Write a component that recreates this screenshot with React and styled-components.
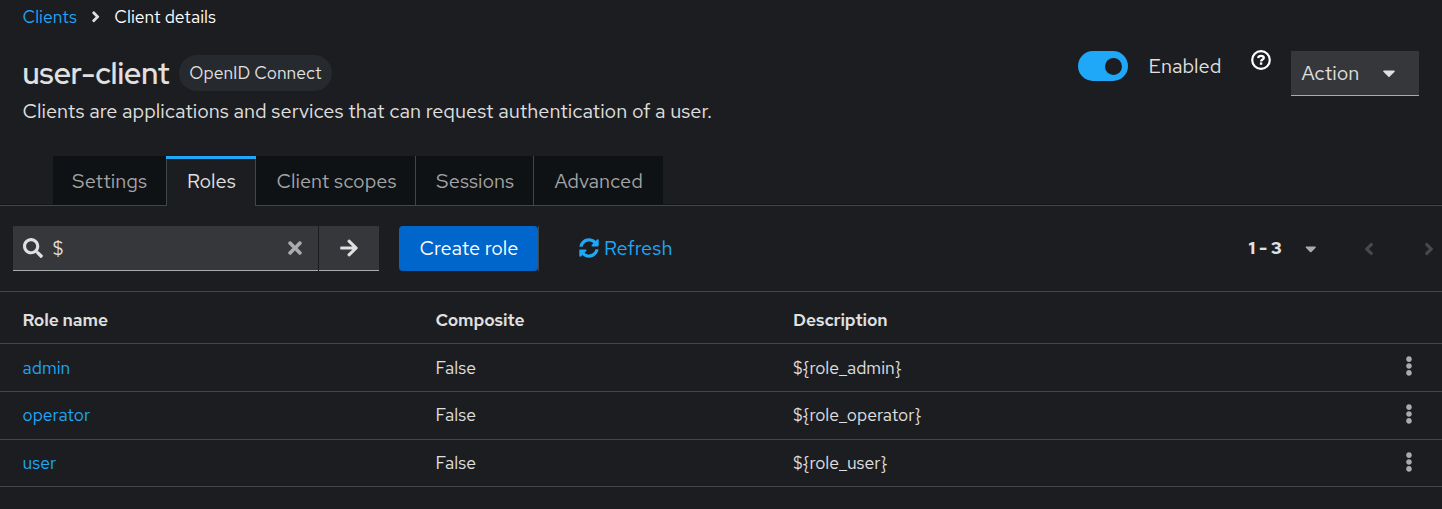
import React from "react";
import styled, { createGlobalStyle } from "styled-components";
import { FaSearch, FaTimes, FaArrowRight, FaSyncAlt, FaCaretDown, FaAngleLeft, FaAngleRight, FaEllipsisV } from "react-icons/fa";

const GlobalStyle = createGlobalStyle`
  * { box-sizing: border-box; }
  body {
    margin: 0;
    background: #1c1d21;
    color: #e0e0e0;
    font-family: "Red Hat Text", "Inter", "Liberation Sans", sans-serif;
    font-size: 17.5px;
    overflow: hidden;
  }
  button { font: inherit; border: 0; margin: 0; padding: 0; background: none; }
  svg { display: block; flex: none; }
`;

const Label = styled.span`
  display: inline-block;
  white-space: nowrap;
  letter-spacing: ${(p) => p.$track || 0}px;
`;

const Page = styled.main`
  height: 509px;
  display: flex;
  flex-direction: column;
  background: #1c1d21;
`;

const Breadcrumb = styled.nav`
  height: 33px;
  padding-left: 22.5px;
  display: flex;
  align-items: center;
  color: #fff;
  svg { margin: 0 10px 0 10px; color: #e0e0e0; }
`;

const Link = styled.a`
  color: #1fa7f8;
  text-decoration: none;
`;

const Header = styled.header`
  height: 123px;
  display: flex;
  justify-content: space-between;
  padding: 18px 23px 0 22.5px;
`;

const TitleRow = styled.div`
  height: 44px;
  display: flex;
  align-items: center;
`;

const Title = styled.h1`
  margin: 0;
  width: 156.5px;
  font-family: "Red Hat Display", "Red Hat Text", "Inter", sans-serif;
  font-size: 30px;
  line-height: 44px;
  font-weight: 600;
`;

const Chip = styled.span`
  width: 153px;
  height: 36px;
  border-radius: 18px;
  background: #26292d;
  display: flex;
  align-items: center;
  justify-content: center;
  padding-bottom: 2px;
`;

const Description = styled.p`
  margin: 0;
  font-size: 20px;
  line-height: 32px;
`;

const HeaderActions = styled.div`
  display: flex;
  align-items: flex-start;
  font-size: 20px;
`;

const Switch = styled.span`
  width: 50px;
  height: 30px;
  border-radius: 15px;
  background: #1fa7f8;
  display: flex;
  align-items: center;
  justify-content: flex-end;
  padding-right: 6px;
  &::after {
    content: "";
    width: 17px;
    height: 17px;
    border-radius: 50%;
    background: #1c1d21;
  }
`;

const SwitchText = styled.span`
  width: 102.5px;
  margin-left: 20.5px;
  line-height: 30px;
`;

const HelpSvg = styled.svg`
  margin-top: -1px;
`;

const ActionToggle = styled.button`
  width: 128px;
  height: 45px;
  margin-left: 20px;
  padding: 0 20px 0 10.5px;
  display: flex;
  align-items: center;
  justify-content: space-between;
  background: #36373a;
  border-bottom: 1px solid #aaabac;
  color: #e0e0e0;
`;

const Tabs = styled.div`
  height: 50px;
  padding-left: 53px;
  display: flex;
  align-items: stretch;
  background: linear-gradient(#444548, #444548) 0 49px / 100% 1px no-repeat,
    linear-gradient(#151618, #151618) 0 48px / 100% 1px no-repeat;
`;

const Tab = styled.button`
  width: ${(p) => p.$width}px;
  height: ${(p) => (p.$active ? 50 : 49)}px;
  padding: 0 0 ${(p) => (p.$active ? 3 : 0)}px ${(p) => p.$inset}px;
  font-size: 20px;
  color: ${(p) => (p.$active ? "#e0e0e0" : "#a3a4a6")};
  background: ${(p) => (p.$active ? "#1c1d21" : "#0f1214")};
  border-right: ${(p) => (p.$divider ? "1px solid #444548" : "0")};
  border-left: ${(p) => (p.$active ? "1px solid #444548" : "0")};
  border-top: ${(p) => (p.$active ? "3px solid #1fa7f8" : "0")};
  display: flex;
  align-items: center;
  justify-content: flex-start;
  ${(p) => p.$active && "border-image: linear-gradient(#1fa7f8 3px, #444548 3px) 3 1 0 1;"}
`;

const Toolbar = styled.div`
  height: 86px;
  padding: 20px 3px 20px 13px;
  display: flex;
  align-items: stretch;
  border-bottom: 1px solid #444548;
  font-size: 20px;
`;

const SearchBox = styled.div`
  width: 305px;
  padding: 0 13px 0 10px;
  display: flex;
  align-items: center;
  background: #36373a;
  border-bottom: 1px solid #aaabac;
`;

const SearchValue = styled.span`
  flex: 1;
  padding-left: 9.5px;
  font-size: 20px;
`;

const SearchSubmit = styled.button`
  width: 60px;
  margin-left: 1px;
  display: flex;
  align-items: center;
  justify-content: center;
  background: #36373a;
  border-bottom: 1px solid #aaabac;
  color: #e0e0e0;
`;

const PrimaryButton = styled.button`
  width: 139px;
  margin-left: 20px;
  padding: 0 0 1px 1px;
  border-radius: 4px;
  background: #0066cc;
  color: #fff;
`;

const ActionGroup = styled.div`
  display: flex;
  border-right: 1px solid #444548;
`;

const RefreshButton = styled.button`
  margin-left: 40px;
  display: flex;
  align-items: center;
  gap: 5px;
  padding-bottom: 1px;
  color: #1fa7f8;
  svg { margin-top: -1px; }
`;

const Pager = styled.div`
  margin-left: auto;
  display: flex;
  align-items: center;
  font-size: 17.5px;
  font-weight: 700;
`;

const PagerRange = styled.span`
  width: 53px;
  padding-bottom: 2px;
`;

const PagerArrow = styled.button`
  margin-left: ${(p) => p.$gap}px;
  color: #47484b;
`;

const Row = styled.div`
  height: ${(p) => p.$height}px;
  padding: 0 23px 0 22.5px;
  display: grid;
  grid-template-columns: 413px 357.5px 1fr 20px;
  align-items: center;
  border-bottom: 1px solid #444548;
  font-weight: ${(p) => (p.$head ? 600 : 400)};
  padding-top: ${(p) => (p.$head ? 3 : 0)}px;
  padding-bottom: ${(p) => p.$lift || 0}px;
`;

const Kebab = styled.button`
  display: flex;
  justify-content: center;
  color: #aaabac;
  margin-top: ${(p) => p.$drop - 3}px;
`;

const HelpIcon = () => (
  <HelpSvg width="20" height="20" viewBox="0 0 20 20" fill="none" stroke="#fff">
    <circle cx="10" cy="10" r="8.8" strokeWidth="2.2" />
    <path d="M7.1 8C7.4 6.5 8.5 5.9 10 5.9C11.6 5.9 12.8 6.7 12.8 8C12.8 9.6 10.1 9.5 10.1 11.5" strokeWidth="2.3" />
    <path d="M8.9 13.6H11.3" strokeWidth="2.3" />
  </HelpSvg>
);

const tabs = [
  { name: "Settings", width: 113, inset: 19 },
  { name: "Roles", width: 90, inset: 20, active: true, divider: true },
  { name: "Client scopes", width: 160, inset: 20.5, divider: true },
  { name: "Sessions", width: 118, inset: 20, divider: true },
  { name: "Advanced", width: 129, inset: 20.5 },
];

const roles = [
  { name: "admin", height: 48, lift: 0, drop: 0 },
  { name: "operator", height: 48, lift: 2, drop: 2 },
  { name: "user", height: 47, lift: 1, drop: 1 },
];

export default function App() {
  return (
    <Page>
      <GlobalStyle />
      <Breadcrumb>
        <Link><Label>Clients</Label></Link>
        <FaAngleRight size={17.5} />
        <Label>Client details</Label>
      </Breadcrumb>
      <Header>
        <div>
          <TitleRow>
            <Title><Label>user-client</Label></Title>
            <Chip><Label>OpenID Connect</Label></Chip>
          </TitleRow>
          <Description>
            <Label>Clients are applications and services that can request authentication of a user.</Label>
          </Description>
        </div>
        <HeaderActions>
          <Switch />
          <SwitchText><Label>Enabled</Label></SwitchText>
          <HelpIcon />
          <ActionToggle>
            <Label>Action</Label>
            <FaCaretDown size={20} />
          </ActionToggle>
        </HeaderActions>
      </Header>
      <Tabs>
        {tabs.map((t) => (
          <Tab key={t.name} $width={t.width} $inset={t.inset} $active={t.active} $divider={t.divider}>
            <Label>{t.name}</Label>
          </Tab>
        ))}
      </Tabs>
      <Toolbar>
        <SearchBox>
          <FaSearch size={20} />
          <SearchValue>$</SearchValue>
          <FaTimes size={20} color="#aaabac" />
        </SearchBox>
        <SearchSubmit><FaArrowRight size={20} /></SearchSubmit>
        <ActionGroup>
          <PrimaryButton><Label>Create role</Label></PrimaryButton>
        </ActionGroup>
        <RefreshButton>
          <FaSyncAlt size={20} />
          <Label>Refresh</Label>
        </RefreshButton>
        <Pager>
          <PagerRange><Label>1 - 3</Label></PagerRange>
          <FaCaretDown size={17.5} color="#aaabac" />
          <PagerArrow $gap={40}><FaAngleLeft size={20} /></PagerArrow>
          <PagerArrow $gap={40}><FaAngleRight size={20} /></PagerArrow>
        </Pager>
      </Toolbar>
      <Row $height={52} $head>
        <Label $track={-0.1}>Role name</Label>
        <Label $track={-0.15}>Composite</Label>
        <Label $track={-0.15}>Description</Label>
      </Row>
      {roles.map((r) => (
        <Row key={r.name} $height={r.height} $lift={r.lift}>
          <Link><Label>{r.name}</Label></Link>
          <Label>False</Label>
          <Label>{"${role_" + r.name + "}"}</Label>
          <Kebab $drop={r.drop}><FaEllipsisV size={20} /></Kebab>
        </Row>
      ))}
    </Page>
  );
}
